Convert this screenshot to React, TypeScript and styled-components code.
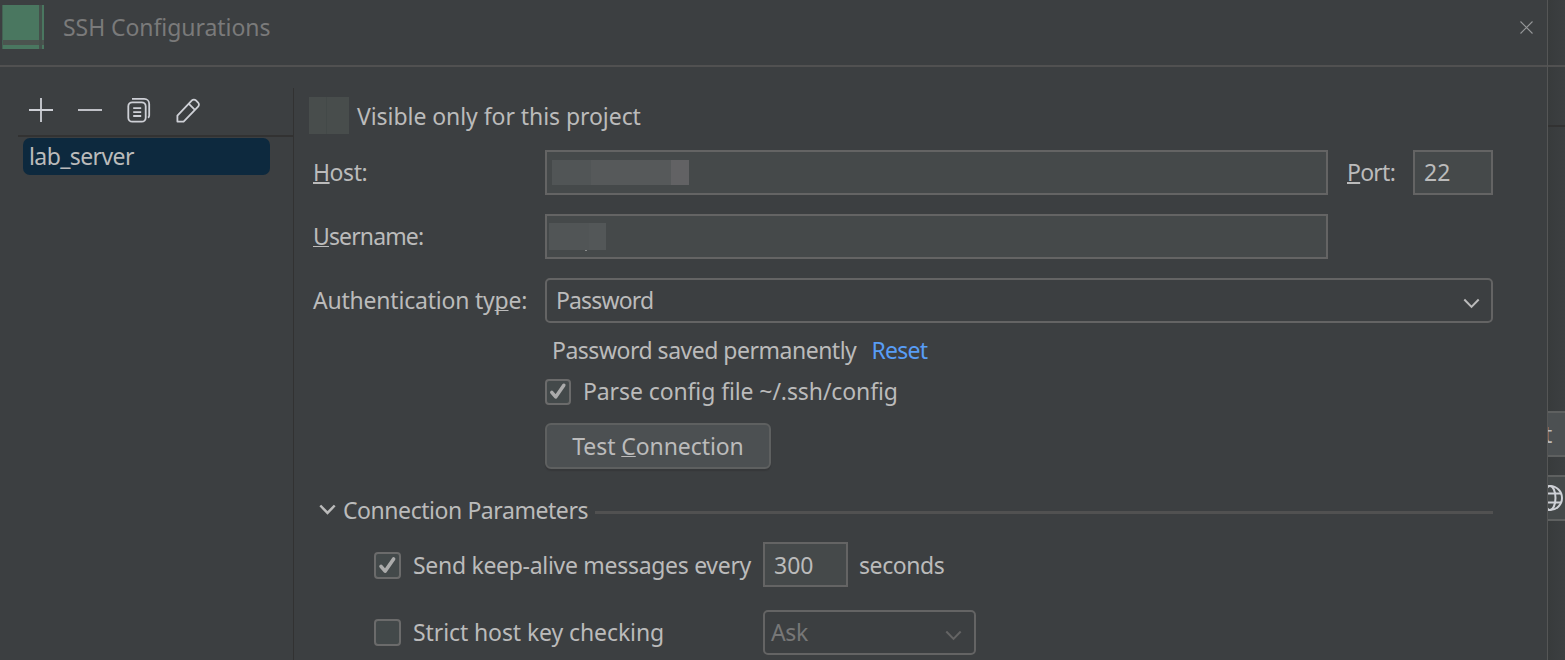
import React from "react";
import styled, { createGlobalStyle, css } from "styled-components";

const Global = createGlobalStyle`
  * { box-sizing: border-box; }
  html, body { margin: 0; padding: 0; background: #3c3f41; }
  body { overflow: hidden; }
`;

const Screen = styled.div`
  display: flex;
  width: 1565px;
  height: 660px;
  overflow: hidden;
  background: #3c3f41;
  color: #bbbbbb;
  font-family: "Noto Sans", "Open Sans", sans-serif;
  font-size: 23px;
  line-height: 32px;
  white-space: pre;
`;

const Dialog = styled.div`
  width: 1547px;
  flex: none;
  display: flex;
  flex-direction: column;
`;

const TitleBar = styled.header`
  height: 67px;
  flex: none;
  display: flex;
  align-items: flex-start;
  padding: 5px 14px 0 2px;
  border-bottom: 2px solid #515151;
`;

const AppIcon = styled.svg`
  display: block;
  flex: none;
`;

const Title = styled.h1<{ $track?: number }>`
  margin: 6px 0 0 19px;
  flex: 1;
  font-size: inherit;
  font-weight: 400;
  color: #7a7a7a;
  letter-spacing: ${(p) => p.$track ?? 0}px;
`;

const CloseButton = styled.button`
  margin: 16px 0 0;
  padding: 0;
  width: 13px;
  height: 13px;
  border: 0;
  background: none;
  display: flex;
`;

const Body = styled.div`
  flex: 1;
  display: flex;
  padding-top: 21px;
  min-height: 0;
`;

const Sidebar = styled.aside`
  width: 294px;
  flex: none;
  padding-left: 18px;
  border-right: 1px solid #323232;
`;

const Toolbar = styled.div`
  height: 49px;
  display: flex;
  align-items: flex-start;
  gap: 21px;
  padding: 8px 0 0 9px;
  border-bottom: 2px solid #323232;
`;

const ToolIcon = styled.svg`
  display: block;
  width: 28px;
  height: 28px;
  fill: none;
  stroke: #ced0d6;
  stroke-width: 1.8;
  stroke-linejoin: round;
`;

const ServerItem = styled.div`
  width: 247px;
  height: 37px;
  margin: 1px 0 0 5px;
  padding: 2px 6px;
  border-radius: 7px;
  background: #0d293e;
`;

const Form = styled.main`
  flex: 1;
  display: flex;
  flex-direction: column;
  padding: 9px 54px 0 19px;
`;

const Row = styled.div<{ $h: number; $top?: number; $left?: number }>`
  display: flex;
  flex: none;
  align-items: center;
  height: ${(p) => p.$h}px;
  margin-top: ${(p) => p.$top ?? 0}px;
  padding-left: ${(p) => p.$left ?? 0}px;
`;

const Text = styled.span<{ $w?: number; $track?: number; $ml?: number; $drop?: number }>`
  flex: none;
  ${(p) => p.$w && css`width: ${p.$w}px;`}
  margin-top: ${(p) => p.$drop ?? -1}px;
  margin-left: ${(p) => p.$ml ?? 0}px;
  letter-spacing: ${(p) => p.$track ?? 0}px;
`;

const Mnemonic = styled.u<{ $thick?: number }>`
  text-decoration-thickness: ${(p) => p.$thick ?? 1}px;
  text-underline-offset: 1px;
  text-decoration-skip-ink: none;
`;

const Link = styled(Text)`
  color: #589df6;
`;

const Field = styled.div<{ $w: number; $pad?: number; $rise?: boolean }>`
  width: ${(p) => p.$w}px;
  height: 45px;
  flex: none;
  display: flex;
  align-items: center;
  margin-top: ${(p) => (p.$rise ? -2 : 0)}px;
  padding-left: ${(p) => p.$pad ?? 9}px;
  border: 2px solid #646464;
  background: #45494a;
`;

const Combo = styled.div<{ $w: number; $off?: boolean }>`
  width: ${(p) => p.$w}px;
  height: 45px;
  flex: none;
  display: flex;
  align-items: center;
  justify-content: space-between;
  padding: 0 ${(p) => (p.$off ? 12.5 : 11.5)}px 0 ${(p) => (p.$off ? 6 : 9)}px;
  border: 2px solid #646464;
  border-radius: 5px;
  color: ${(p) => (p.$off ? "#777777" : "#bbbbbb")};
`;

const Chevron = styled.svg<{ $dim?: boolean; $drop?: number; $bold?: boolean }>`
  display: block;
  flex: none;
  margin-top: ${(p) => p.$drop ?? 0}px;
  fill: none;
  stroke: ${(p) => (p.$dim ? "#646464" : "#bbbbbb")};
  stroke-width: ${(p) => (p.$bold ? 2.5 : 2)};
`;

const Box = styled.span<{ $size: number }>`
  width: ${(p) => p.$size}px;
  height: ${(p) => p.$size}px;
  flex: none;
  display: flex;
  align-items: center;
  justify-content: center;
  border: 2px solid #6b6b6b;
  border-radius: 4px;
  background: #43494a;
`;

const Button = styled.button`
  width: 226px;
  height: 46px;
  padding: 0;
  border: 2px solid #5e6060;
  border-radius: 6px;
  background: #4c5052;
  box-shadow: 0 2px 1px #36383a;
  font: inherit;
  color: inherit;
  line-height: 32px;
`;

const Mask = styled.span<{ $w: number; $h: number; $bg: string; $ml?: number }>`
  width: ${(p) => p.$w}px;
  height: ${(p) => p.$h}px;
  margin-left: ${(p) => p.$ml ?? 0}px;
  flex: none;
  background: ${(p) => p.$bg};
`;

const NameMask = styled(Mask)`
  position: relative;
  &::after {
    content: "";
    position: absolute;
    left: 36px;
    bottom: -1px;
    width: 2px;
    height: 1px;
    background: #8a8c8c;
  }
`;

const Rule = styled.span`
  flex: 1;
  height: 3px;
  margin: 4px 0 0 7px;
  background: #515151;
`;

const Backdrop = styled.div`
  width: 18px;
  flex: none;
  overflow: hidden;
  border-left: 1px solid #555656;
  background: linear-gradient(90deg, #383b3c, #3c3f41);
`;

const BackdropBar = styled.div<{ $h: number; $line: string }>`
  height: ${(p) => p.$h}px;
  border-bottom: 2px solid ${(p) => p.$line};
`;

const BackdropControl = styled.div<{ $top: number; $bg: string }>`
  height: 46px;
  margin-top: ${(p) => p.$top}px;
  padding-top: 5px;
  overflow: hidden;
  border-top: 2px solid #5e6060;
  border-bottom: 2px solid #5e6060;
  background: ${(p) => p.$bg};
`;

const Clipped = styled.span`
  display: block;
  margin-left: -4px;
`;

const Globe = styled.svg`
  display: block;
  margin: 2px 0 0 -12px;
  fill: none;
  stroke: #ced0d6;
  stroke-width: 2;
`;

function ChevronDown(props: { dim?: boolean; drop?: number; bold?: boolean }) {
  return (
    <Chevron width="17" height="11" viewBox="0 0 17 11" $dim={props.dim} $drop={props.drop} $bold={props.bold}>
      <path d="M1.3 1.5 8.5 8.9 15.7 1.5" />
    </Chevron>
  );
}

function Checkbox({ checked, size = 27 }: { checked?: boolean; size?: number }) {
  return (
    <Box $size={size}>
      {checked && (
        <svg width="23" height="23" viewBox="0 0 23 23" fill="none" stroke="#ababab" strokeWidth="3.6">
          <path d="M5 12.4 9.1 17.2 17.6 5" strokeLinecap="round" strokeLinejoin="round" />
        </svg>
      )}
    </Box>
  );
}

export default function App() {
  return (
    <Screen>
      <Global />
      <Dialog>
        <TitleBar>
          <AppIcon width="42" height="44" viewBox="0 0 42 44">
            <rect width="42" height="44" fill="#4a7760" />
            <rect y="35" width="42" height="5" fill="#4b544f" />
            <rect x="37" width="3" height="44" fill="#45504b" />
            <rect width="1" height="44" fill="#436253" />
          </AppIcon>
          <Title $track={-0.06}>SSH Configurations</Title>
          <CloseButton aria-label="Close">
            <svg width="13" height="13" viewBox="0 0 13 13" stroke="#969899" strokeWidth="1.1">
              <path d="M.5.5 12.5 12.5M12.5.5.5 12.5" />
            </svg>
          </CloseButton>
        </TitleBar>
        <Body>
          <Sidebar>
            <Toolbar>
              <ToolIcon viewBox="0 0 28 28"><path d="M14 2v24M2 14h24" /></ToolIcon>
              <ToolIcon viewBox="0 0 28 28"><path d="M2 14h24" /></ToolIcon>
              <ToolIcon viewBox="0 0 28 28">
                <rect x="3.3" y="6.3" width="17.4" height="19.4" rx="4" />
                <path d="M7 2.9h12.2a5 5 0 0 1 5 5V19.5q0 1.5-1.2 2.2M8.2 12.2h8M8.2 16.1h8M8.2 20h8" />
              </ToolIcon>
              <ToolIcon viewBox="0 0 28 28">
                <path d="M3.4 19.6 17.9 4.4a2.8 2.8 0 0 1 4 0l2.2 2.2a2.8 2.8 0 0 1 0 4L9.6 25.6H3.4ZM14.9 7.9 20.9 13.8" />
              </ToolIcon>
            </Toolbar>
            <ServerItem><Text $track={-0.6}>lab_server</Text></ServerItem>
          </Sidebar>
          <Form>
            <Row $h={37}>
              <Mask $w={40} $h={37} $ml={-4} $bg="linear-gradient(90deg,#484d4c 0 17px,#434948 17px 18px,#484d4c 18px)" />
              <Text $ml={8} $drop={1} $track={-0.06}>Visible only for this project</Text>
            </Row>
            <Row $h={45} $top={16}>
              <Text $w={232} $track={-0.45}><Mnemonic $thick={2}>H</Mnemonic>ost:</Text>
              <Field $w={783} $pad={5}>
                <Mask $w={137} $h={25} $bg="linear-gradient(90deg,#515556 0 39px,#56595a 39px 119px,#626264 119px)" />
              </Field>
              <Text $ml={19} $w={66} $track={-0.75}><Mnemonic $thick={2}>P</Mnemonic>ort:</Text>
              <Field $w={80}><Text $track={0.2}>22</Text></Field>
            </Row>
            <Row $h={45} $top={19}>
              <Text $w={232} $track={-0.87}><Mnemonic>U</Mnemonic>sername:</Text>
              <Field $w={783} $pad={2}>
                <NameMask $w={57} $h={27} $bg="linear-gradient(90deg,#515556 0 40px,#535758 40px)" />
              </Field>
            </Row>
            <Row $h={45} $top={19}>
              <Text $w={232} $track={-0.21}>Authentication ty<Mnemonic>p</Mnemonic>e:</Text>
              <Combo $w={948}><Text $track={-0.85}>Password</Text><ChevronDown drop={5} /></Combo>
            </Row>
            <Row $h={31} $top={12} $left={239}>
              <Text $track={-0.49}>Password saved permanently</Text>
              <Link $ml={15} $track={-0.75}>Reset</Link>
            </Row>
            <Row $h={27} $top={12} $left={232}>
              <Checkbox checked size={26} />
              <Text $ml={12} $track={-0.1}>Parse config file ~/.ssh/config</Text>
            </Row>
            <Row $h={46} $top={18} $left={232}>
              <Button><Text $track={-0.08}>Test <Mnemonic>C</Mnemonic>onnection</Text></Button>
            </Row>
            <Row $h={31} $top={26} $left={6}>
              <ChevronDown bold drop={-3} />
              <Text $ml={7} $track={-0.44}>Connection Parameters</Text>
              <Rule />
            </Row>
            <Row $h={45} $top={17} $left={61}>
              <Checkbox checked />
              <Text $ml={12} $w={350} $track={-0.3}>Send keep-alive messages every</Text>
              <Field $w={85} $rise><Text $drop={1}>300</Text></Field>
              <Text $ml={11} $track={-0.43}>seconds</Text>
            </Row>
            <Row $h={45} $top={22} $left={61}>
              <Checkbox />
              <Text $ml={12} $w={350} $track={-0.1}>Strict host key checking</Text>
              <Combo $w={213} $off><Text $track={-0.35}>Ask</Text><ChevronDown dim drop={5} /></Combo>
            </Row>
          </Form>
        </Body>
      </Dialog>
      <Backdrop>
        <BackdropBar $h={67} $line="#515151" />
        <BackdropBar $h={60} $line="#323232" />
        <BackdropControl $top={284} $bg="#4c5052"><Clipped>t</Clipped></BackdropControl>
        <BackdropControl $top={18} $bg="#45494a">
          <Globe width="28" height="28" viewBox="0 0 28 28">
            <circle cx="14" cy="14" r="12" />
            <ellipse cx="14" cy="14" rx="5.5" ry="12" />
            <path d="M3 9.5h22M3 18.5h22" />
          </Globe>
        </BackdropControl>
      </Backdrop>
    </Screen>
  );
}
